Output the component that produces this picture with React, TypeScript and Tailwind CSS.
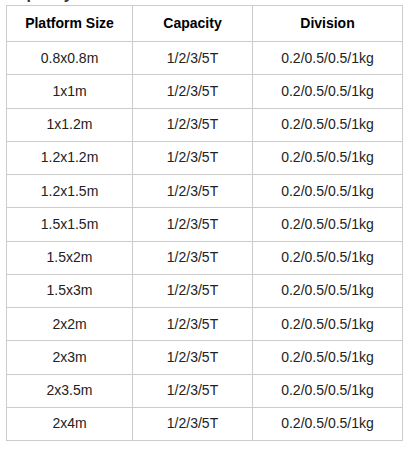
import React from "react";

const rows = [
  "0.8x0.8m",
  "1x1m",
  "1x1.2m",
  "1.2x1.2m",
  "1.2x1.5m",
  "1.5x1.5m",
  "1.5x2m",
  "1.5x3m",
  "2x2m",
  "2x3m",
  "2x3.5m",
  "2x4m",
];

export default function App() {
  return (
    <div className="bg-white min-h-[450px] overflow-hidden px-[6px] font-['Liberation_Sans',Arial,sans-serif] text-[14px] text-[#222]">
      <h2 className="mt-[-17px] h-[22px] text-[16px] leading-[22px] font-bold text-[#333]">Capacity</h2>
      <table className="w-[396px] border-collapse table-fixed">
        <colgroup>
          <col className="w-[126px]" />
          <col className="w-[120px]" />
          <col className="w-[150px]" />
        </colgroup>
        <thead>
          <tr className="h-[36px]">
            <th className="border border-[#cccccc] font-bold text-black text-center">Platform Size</th>
            <th className="border border-[#cccccc] font-bold text-black text-center">Capacity</th>
            <th className="border border-[#cccccc] font-bold text-black text-center">Division</th>
          </tr>
        </thead>
        <tbody>
          {rows.map((size) => (
            <tr key={size} className="h-[33.25px]">
              <td className="border border-[#cccccc] text-center p-0">{size}</td>
              <td className="border border-[#cccccc] text-center p-0">1/2/3/5T</td>
              <td className="border border-[#cccccc] text-center p-0">0.2/0.5/0.5/1kg</td>
            </tr>
          ))}
        </tbody>
      </table>
    </div>
  );
}
